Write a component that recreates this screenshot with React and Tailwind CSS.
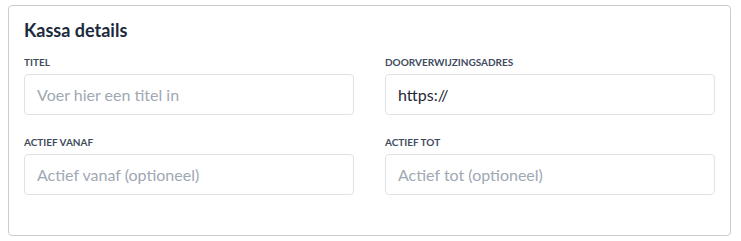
import React from "react";

function Field({ label, placeholder, value }) {
  return (
    <div className="flex flex-col">
      <label className="text-[10px] leading-[12px] font-bold uppercase text-[#3f4b5d] mb-[6px]">
        {label}
      </label>
      {value ? (
        <div className="h-[41px] rounded-[4px] border border-[#dfe3e8] bg-white px-[12px] flex items-center text-[16px] text-[#1f2937]">
          {value}
        </div>
      ) : (
        <div className="h-[41px] rounded-[4px] border border-[#dfe3e8] bg-white px-[12px] flex items-center text-[16px] text-[#a0a8b4]">
          {placeholder}
        </div>
      )}
    </div>
  );
}

export default function App() {
  return (
    <div className="w-[741px] h-[241px] bg-white pt-[5px] pl-[8px]" style={{ fontFamily: "Lato, 'Open Sans', sans-serif" }}>
      <div className="w-[723px] h-[231px] rounded-[4px] border border-[#c9cdd3] bg-white px-[15px] pt-[13px]">
        <h2 className="text-[18px] leading-[22px] font-bold text-[#1d2a3d] mb-[15px]">Kassa details</h2>
        <div className="grid grid-cols-2 gap-x-[31px] gap-y-[21px]">
          <Field label="Titel" placeholder="Voer hier een titel in" />
          <Field label="Doorverwijzingsadres" value="https://" />
          <Field label="Actief vanaf" placeholder="Actief vanaf (optioneel)" />
          <Field label="Actief tot" placeholder="Actief tot (optioneel)" />
        </div>
      </div>
    </div>
  );
}
